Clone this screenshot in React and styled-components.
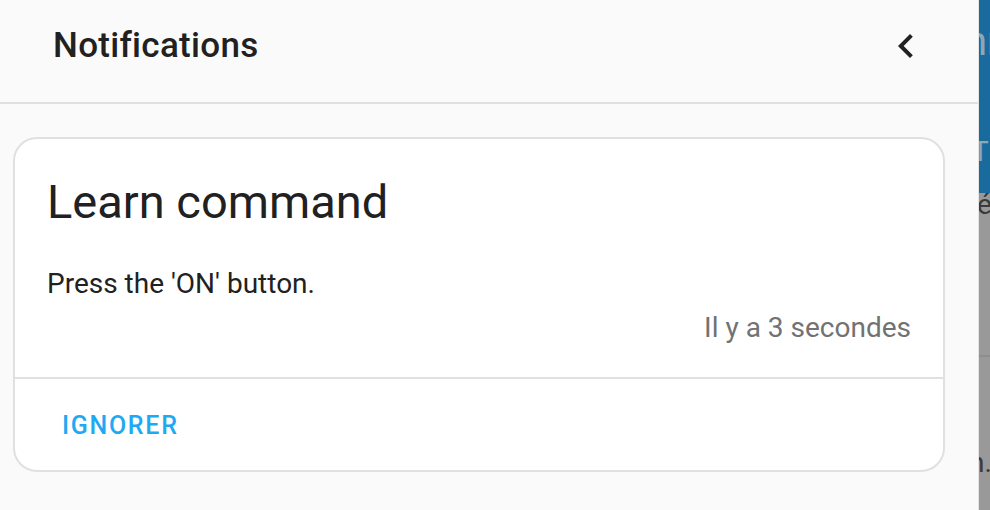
import React from 'react';
import styled, { createGlobalStyle } from 'styled-components';

const GlobalStyle = createGlobalStyle`
  html, body {
    margin: 0;
    padding: 0;
    background: #999999;
    font-family: Roboto, "Noto Sans", sans-serif;
    -webkit-font-smoothing: antialiased;
  }
`;

const Screen = styled.div`
  display: flex;
  width: 990px;
  height: 510px;
  overflow: hidden;
`;

const Drawer = styled.aside`
  width: 978px;
  flex-shrink: 0;
  display: flex;
  flex-direction: column;
  background: #fafafa;
  border-right: 1px solid #e4e4e4;
`;

const Header = styled.header`
  height: 102px;
  display: flex;
  align-items: center;
  justify-content: space-between;
  padding: 0 48px 0 53px;
  border-bottom: 2px solid #e0e0e0;
`;

const Title = styled.h1`
  margin: 0 0 12px;
  font-size: 35px;
  font-weight: 500;
  color: #212121;
  letter-spacing: 0.3px;
`;

const IconButton = styled.button`
  width: 48px;
  height: 48px;
  padding: 0;
  border: 0;
  background: none;
  display: flex;
  align-items: center;
  justify-content: center;
  color: #212121;
  margin-top: -10px;
`;

const List = styled.div`
  padding: 33px 33px 0 13px;
`;

const Card = styled.div`
  background: #fff;
  border: 2px solid #e0e0e0;
  border-radius: 24px;
  display: flex;
  flex-direction: column;
`;

const CardContent = styled.div`
  height: 238px;
  box-sizing: border-box;
  padding: 31px 32px 0;
  display: flex;
  flex-direction: column;
`;

const CardTitle = styled.div`
  font-size: 47px;
  line-height: 64px;
  color: #212121;
`;

const Message = styled.div`
  margin-top: 30px;
  font-size: 28px;
  line-height: 40px;
  color: #212121;
`;

const Time = styled.div`
  margin-top: 4px;
  text-align: right;
  font-size: 28px;
  line-height: 40px;
  color: #727272;
`;

const Actions = styled.div`
  height: 91px;
  border-top: 2px solid #e0e0e0;
  display: flex;
  align-items: center;
  padding: 0 16px;
`;

const TextButton = styled.button`
  border: 0;
  background: none;
  padding: 0 31px;
  margin-top: 2px;
  font-family: Roboto, sans-serif;
  font-size: 25px;
  font-weight: 500;
  letter-spacing: 1.7px;
  text-transform: uppercase;
  color: #1ea9f2;
`;

const Backdrop = styled.div`
  flex: 1;
  display: flex;
  flex-direction: column;
  overflow: hidden;
`;

const BackdropBar = styled.div`
  height: 193px;
  background: #1a6b9d;
  display: flex;
  flex-direction: column;
`;

const BackdropPage = styled.div`
  flex: 1;
  background: #999999;
  display: flex;
  flex-direction: column;
`;

const Fragment = styled.span`
  display: block;
  white-space: nowrap;
  font-family: Roboto, sans-serif;
  font-size: ${p => p.$size}px;
  line-height: ${p => p.$size}px;
  color: ${p => p.$color};
  margin-top: ${p => p.$top}px;
  margin-left: ${p => p.$shift}px;
`;

const Rule = styled.div`
  margin-top: ${p => p.$top}px;
  height: 2px;
  background: #8e8e8e;
`;

function ChevronLeft() {
  return (
    <svg width="48" height="48" viewBox="0 0 24 24" fill="currentColor">
      <path d="M15.41,16.58L10.83,12L15.41,7.41L14,6L8,12L14,18L15.41,16.58Z" />
    </svg>
  );
}

export default function App() {
  return (
    <>
      <GlobalStyle />
      <Screen>
        <Drawer>
          <Header>
            <Title>Notifications</Title>
            <IconButton aria-label="Fermer">
              <ChevronLeft />
            </IconButton>
          </Header>
          <List>
            <Card>
              <CardContent>
                <CardTitle>Learn command</CardTitle>
                <Message>Press the 'ON' button.</Message>
                <Time>Il y a 3 secondes</Time>
              </CardContent>
              <Actions>
                <TextButton>Ignorer</TextButton>
              </Actions>
            </Card>
          </List>
        </Drawer>
        <Backdrop>
          <BackdropBar>
            <Fragment $size={40} $top={22} $shift={-14} $color="#8fa6b5">nn</Fragment>
            <Fragment $size={28} $top={76} $shift={-7} $color="#8fa6b5">T</Fragment>
          </BackdropBar>
          <BackdropPage>
            <Fragment $size={28} $top={-2} $shift={-2} $color="#3a3a3a">é</Fragment>
            <Rule $top={136} />
            <Fragment $size={28} $top={92} $shift={-10} $color="#3a3a3a">n.</Fragment>
          </BackdropPage>
        </Backdrop>
      </Screen>
    </>
  );
}
